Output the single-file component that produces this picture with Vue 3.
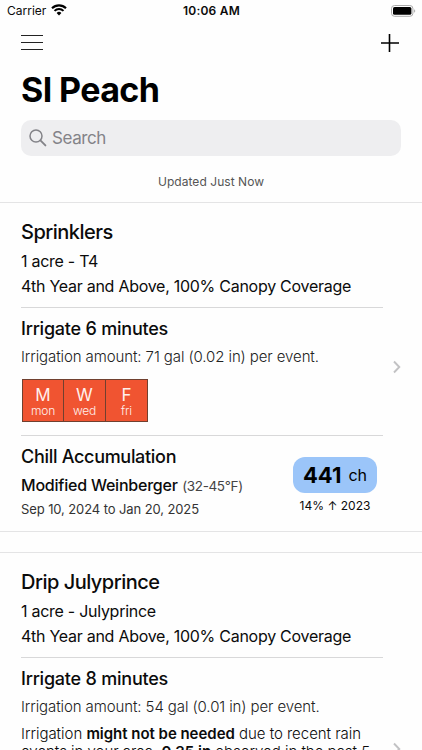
<template>
	<div id="screen">
		<header>
			<div class="status">
				<div class="carrier">
					<span>Carrier</span>
					<svg width="16" height="12" viewBox="0 0 16 12">
						<path d="M1 4.2a10 10 0 0 1 14 0" fill="none" stroke="#000" stroke-width="2.1" />
						<path d="M3.5 6.9a6.4 6.4 0 0 1 9 0" fill="none" stroke="#000" stroke-width="2" />
						<path d="M5.6 9a3.4 3.4 0 0 1 4.8 0L8 11.4z" />
					</svg>
				</div>
				<div class="time">10:06 AM</div>
				<div class="battery">
					<svg width="25" height="12" viewBox="0 0 25 12">
						<rect x="0.5" y="0.5" width="21.4" height="10.8" rx="3" fill="none" stroke="#aaa" />
						<rect x="2" y="2" width="18.4" height="7.8" rx="1.6" />
						<path d="M23.1 4.2a2 2 0 0 1 0 3.6z" fill="#aaa" />
					</svg>
				</div>
			</div>
			<nav>
				<svg width="22" height="18" viewBox="0 0 22 18">
					<path d="M0 1.5h22M0 8.500h22M0 15.500h22" stroke="#222" stroke-width="1.1" />
				</svg>
				<svg width="18" height="18" viewBox="0 0 18 18">
					<path d="M0 9h18M8.500 0v18" stroke="#000" stroke-width="1.6" />
				</svg>
			</nav>
			<h1>SI Peach</h1>
			<div class="search">
				<svg width="18" height="18" viewBox="0 0 18 18">
					<circle cx="7" cy="7" r="6" fill="none" stroke="#838388" stroke-width="1.5" />
					<path d="M11.4 11.4l5 5" stroke="#838388" stroke-width="1.9" stroke-linecap="round" />
				</svg>
				<span>Search</span>
			</div>
			<p class="updated">Updated Just Now</p>
		</header>

		<section v-for="block in blocks" :key="block.name" class="block" :class="{ tall: block.rain }">
			<div class="content">
				<h2>{{ block.name }}</h2>
				<p class="info">{{ block.size }}</p>
				<p class="info coverage">4th Year and Above, 100% Canopy Coverage</p>
				<div class="irrigation">
					<h3>Irrigate {{ block.minutes }} minutes</h3>
					<p class="amount">Irrigation amount: {{ block.amount }} per event.</p>
					<p v-if="block.rain" class="rain">
						Irrigation <b>might not be needed</b> due to recent rain<br />
						events in your area. <b>{{ block.rain }}</b> observed in the past 5
					</p>
					<div v-if="block.days" class="days">
						<div v-for="day in block.days" :key="day" class="day">
							<span class="letter">{{ day[0].toUpperCase() }}</span>
							<span class="short">{{ day }}</span>
						</div>
					</div>
				</div>
				<div v-if="block.chill" class="chill">
					<div>
						<h3>Chill Accumulation</h3>
						<p class="model"><span>Modified Weinberger</span> <small>(32-45°F)</small></p>
						<p class="range">{{ block.chill.range }}</p>
					</div>
					<div class="total">
						<div class="pill"><b>{{ block.chill.hours }}</b><span>ch</span></div>
						<p>{{ block.chill.change }}</p>
					</div>
				</div>
			</div>
			<svg class="chevron" width="8" height="14" viewBox="0 0 8 14">
				<path d="M1 1.500L6.300 7L1 12.500" fill="none" stroke="#c2c2c4" stroke-width="1.9" />
			</svg>
		</section>
	</div>
</template>

<script setup>
const blocks = [
	{
		name: 'Sprinklers',
		size: '1 acre - T4',
		minutes: 6,
		amount: '71 gal (0.02 in)',
		days: ['mon', 'wed', 'fri'],
		chill: {
			range: 'Sep 10, 2024 to Jan 20, 2025',
			hours: 441,
			change: '14% ↑ 2023',
		},
	},
	{
		name: 'Drip Julyprince',
		size: '1 acre - Julyprince',
		minutes: 8,
		amount: '54 gal (0.01 in)',
		rain: '0.35 in',
	},
]
</script>

<style>
body {
	margin: 0;
	overflow: hidden;
}
</style>

<style scoped>
#screen {
	height: 750px;
	overflow: hidden;
	background-color: #fefefe;
	color: #0b0b0b;
	font-family: Inter, 'Liberation Sans', sans-serif;
	white-space: nowrap;
}
h1,
h2,
h3,
p {
	margin: 0;
}
svg {
	display: block;
	flex: none;
}

header {
	height: 202px;
}
.status {
	display: grid;
	grid-template-columns: 1fr auto 1fr;
	align-items: center;
	height: 22px;
	padding: 0 6px 0 7px;
	font-size: 12px;
}
.carrier {
	display: flex;
	align-items: center;
	gap: 5px;
	margin-top: -1px;
}
.carrier svg {
	margin-top: -1px;
}
.time {
	margin-top: -1px;
	font-weight: 600;
	letter-spacing: 0.2px;
}
.battery {
	justify-self: end;
	margin-top: -1px;
}
nav {
	display: flex;
	justify-content: space-between;
	align-items: center;
	height: 42px;
	padding: 0 23px 0 21px;
}
h1 {
	padding-left: 21px;
	font-size: 34px;
	line-height: 52px;
	font-weight: 700;
	letter-spacing: -0.6px;
	color: #000;
}
.search {
	display: flex;
	align-items: center;
	gap: 5px;
	height: 36px;
	margin: 4px 21px 0;
	padding-left: 8px;
	border-radius: 10px;
	background-color: #eeeef0;
	color: #838388;
	font-size: 17px;
	letter-spacing: -0.4px;
}
.updated {
	padding-top: 16px;
	text-align: center;
	font-size: 12px;
	line-height: 20px;
	letter-spacing: 0.05px;
	color: #555;
}

.block {
	display: flex;
	justify-content: space-between;
	align-items: center;
	height: 328px;
	margin-bottom: 20px;
	padding-right: 21px;
	border-top: 1px solid #e4e4e5;
	border-bottom: 1px solid #e4e4e5;
}
.tall {
	height: 392px;
}
.content {
	align-self: flex-start;
	width: 362px;
	margin-left: 21px;
}
h2 {
	padding-top: 14px;
	font-size: 20px;
	line-height: 30px;
	font-weight: 500;
	letter-spacing: -0.5px;
}
.info {
	padding-top: 2px;
	font-size: 16px;
	line-height: 25px;
	letter-spacing: -0.27px;
}
.coverage {
	padding-top: 0;
}
.irrigation {
	margin-top: 8px;
	border-top: 1px solid #d8d8d9;
}
h3 {
	padding-top: 7px;
	font-size: 18px;
	line-height: 27px;
	font-weight: 550;
	letter-spacing: -0.22px;
}
.amount {
	padding-top: 4px;
	font-size: 15px;
	line-height: 22px;
	font-weight: 300;
	letter-spacing: -0.1px;
	color: #222;
}
.rain {
	padding-top: 7px;
	font-size: 15px;
	line-height: 18px;
	font-weight: 300;
	letter-spacing: -0.03px;
}
.rain b {
	font-weight: 600;
}
.days {
	display: flex;
	width: max-content;
	margin: 11px 0 0 1px;
	border-left: 1px solid #70402f;
}
.day {
	display: flex;
	flex-direction: column;
	align-items: center;
	box-sizing: border-box;
	width: 42px;
	height: 43px;
	padding-top: 6px;
	border: 1px solid #70402f;
	border-left: 0;
	background-color: #f05431;
	color: #fff0ec;
}
.day:first-child {
	width: 41px;
}
.letter {
	font-size: 17px;
	line-height: 18px;
}
.short {
	font-size: 12px;
	line-height: 13px;
	font-weight: 300;
	letter-spacing: -0.2px;
}
.chill {
	display: flex;
	justify-content: space-between;
	margin-top: 13px;
	border-top: 1px solid #d8d8d9;
}
.chill h3 {
	letter-spacing: -0.3px;
}
.model {
	padding-top: 3px;
	font-size: 16px;
	line-height: 24px;
}
.model span {
	font-weight: 550;
	letter-spacing: -0.22px;
}
.model small {
	font-size: 13.5px;
	letter-spacing: -0.35px;
	color: #444;
}
.range {
	font-size: 13px;
	line-height: 22px;
	letter-spacing: -0.1px;
	color: #333;
}
.total {
	padding: 21px 6px 0 0;
	text-align: center;
}
.pill {
	display: flex;
	justify-content: center;
	align-items: center;
	gap: 7px;
	width: 84px;
	height: 36px;
	border-radius: 12px;
	background-color: #9bc5f9;
	font-size: 16px;
	color: #000;
}
.pill b {
	font-size: 22px;
}
.total p {
	font-size: 12px;
	line-height: 25px;
}
</style>
